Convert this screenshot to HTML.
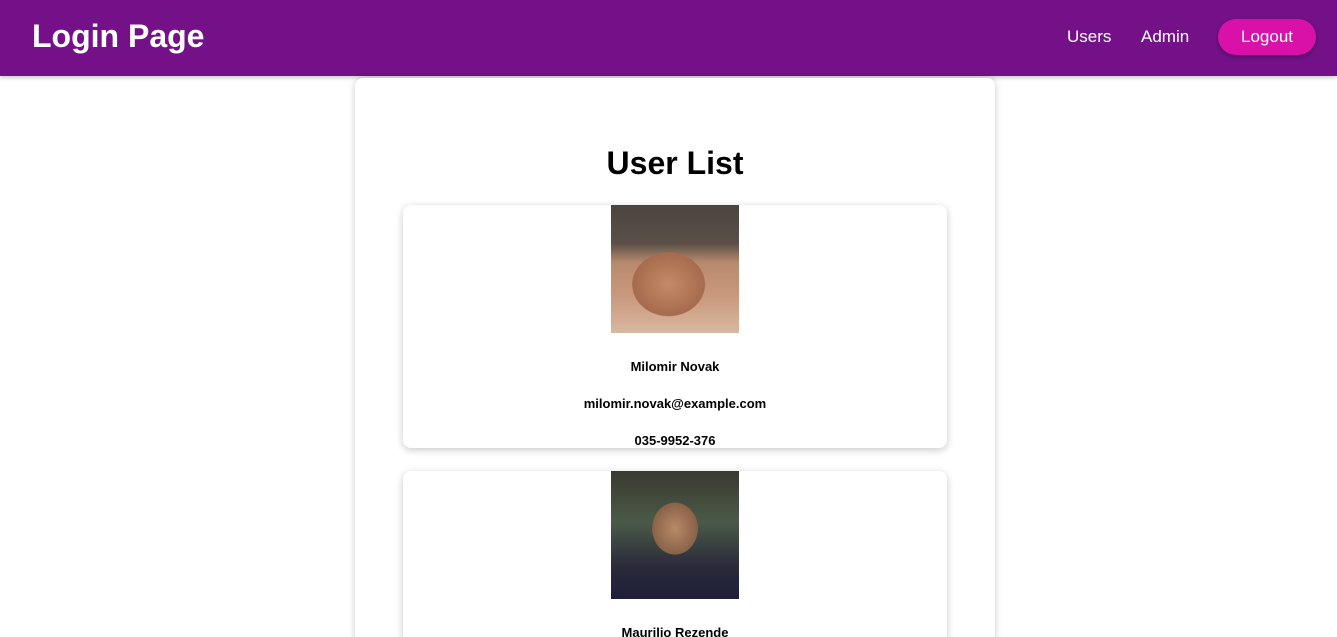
<!DOCTYPE html>
<html style="width:1337px;height:637px;overflow:hidden"><head><style>
*{margin:0;padding:0;box-sizing:border-box}
body{width:1337px;height:637px;overflow:hidden;background:#fff;font-family:"Liberation Sans",Arial,sans-serif;position:relative}
.hd{position:absolute;left:0;top:0;width:1337px;height:76px;background:#741189;box-shadow:0 2px 4px rgba(0,0,0,.2)}
.hd h1{position:absolute;left:32px;top:18px;color:#fff;font-size:32px;font-weight:bold}
.nav{position:absolute;top:27px;color:#fff;font-size:17px}
.btn{position:absolute;left:1218px;top:19px;width:98px;height:36px;border-radius:18px;background:#d911a9;color:#fff;font-size:17px;text-align:center;line-height:35px;box-shadow:0 2px 5px rgba(0,0,0,.3)}
.box{position:absolute;left:355px;top:78px;width:640px;height:570px;background:#fff;border-radius:8px;box-shadow:0 0 8px rgba(0,0,0,.2)}
.title{position:absolute;left:355px;width:640px;top:145px;text-align:center;font-size:32px;font-weight:bold;color:#000}
.card{position:absolute;left:403px;width:544px;height:243px;background:#fff;border-radius:8px;box-shadow:0 2px 8px rgba(0,0,0,.22)}
.ph{position:absolute;left:208px;top:0;width:128px;height:128px}
.t{position:absolute;left:0;width:544px;text-align:center;font-size:13px;font-weight:bold;color:#000}
</style></head><body>
<div class="hd"><h1>Login Page</h1>
<span class="nav" style="left:1067px">Users</span>
<span class="nav" style="left:1141px">Admin</span>
<div class="btn">Logout</div></div>
<div class="box"></div>
<div class="title">User List</div>
<div class="card" style="top:205px">
<div class="ph" style="background:radial-gradient(ellipse 40% 35% at 45% 62%,#c58a66,#a66b4e 70%,transparent 72%),linear-gradient(180deg,#4a4440 0%,#5a5048 30%,#b88a6c 45%,#c9987a 70%,#d8b8a0 100%)"></div>
<div class="t" style="top:154px">Milomir Novak</div>
<div class="t" style="top:191px">milomir.novak@example.com</div>
<div class="t" style="top:228px">035-9952-376</div>
</div>
<div class="card" style="top:471px;height:180px">
<div class="ph" style="top:0;background:radial-gradient(ellipse 22% 25% at 50% 45%,#b58a66,#8a6248 80%,transparent 82%),linear-gradient(180deg,#3a3a30 0%,#4a5a48 40%,#2a2a3a 75%,#1e1e3a 100%)"></div>
<div class="t" style="top:154px">Maurilio Rezende</div>
</div>
</body></html>
